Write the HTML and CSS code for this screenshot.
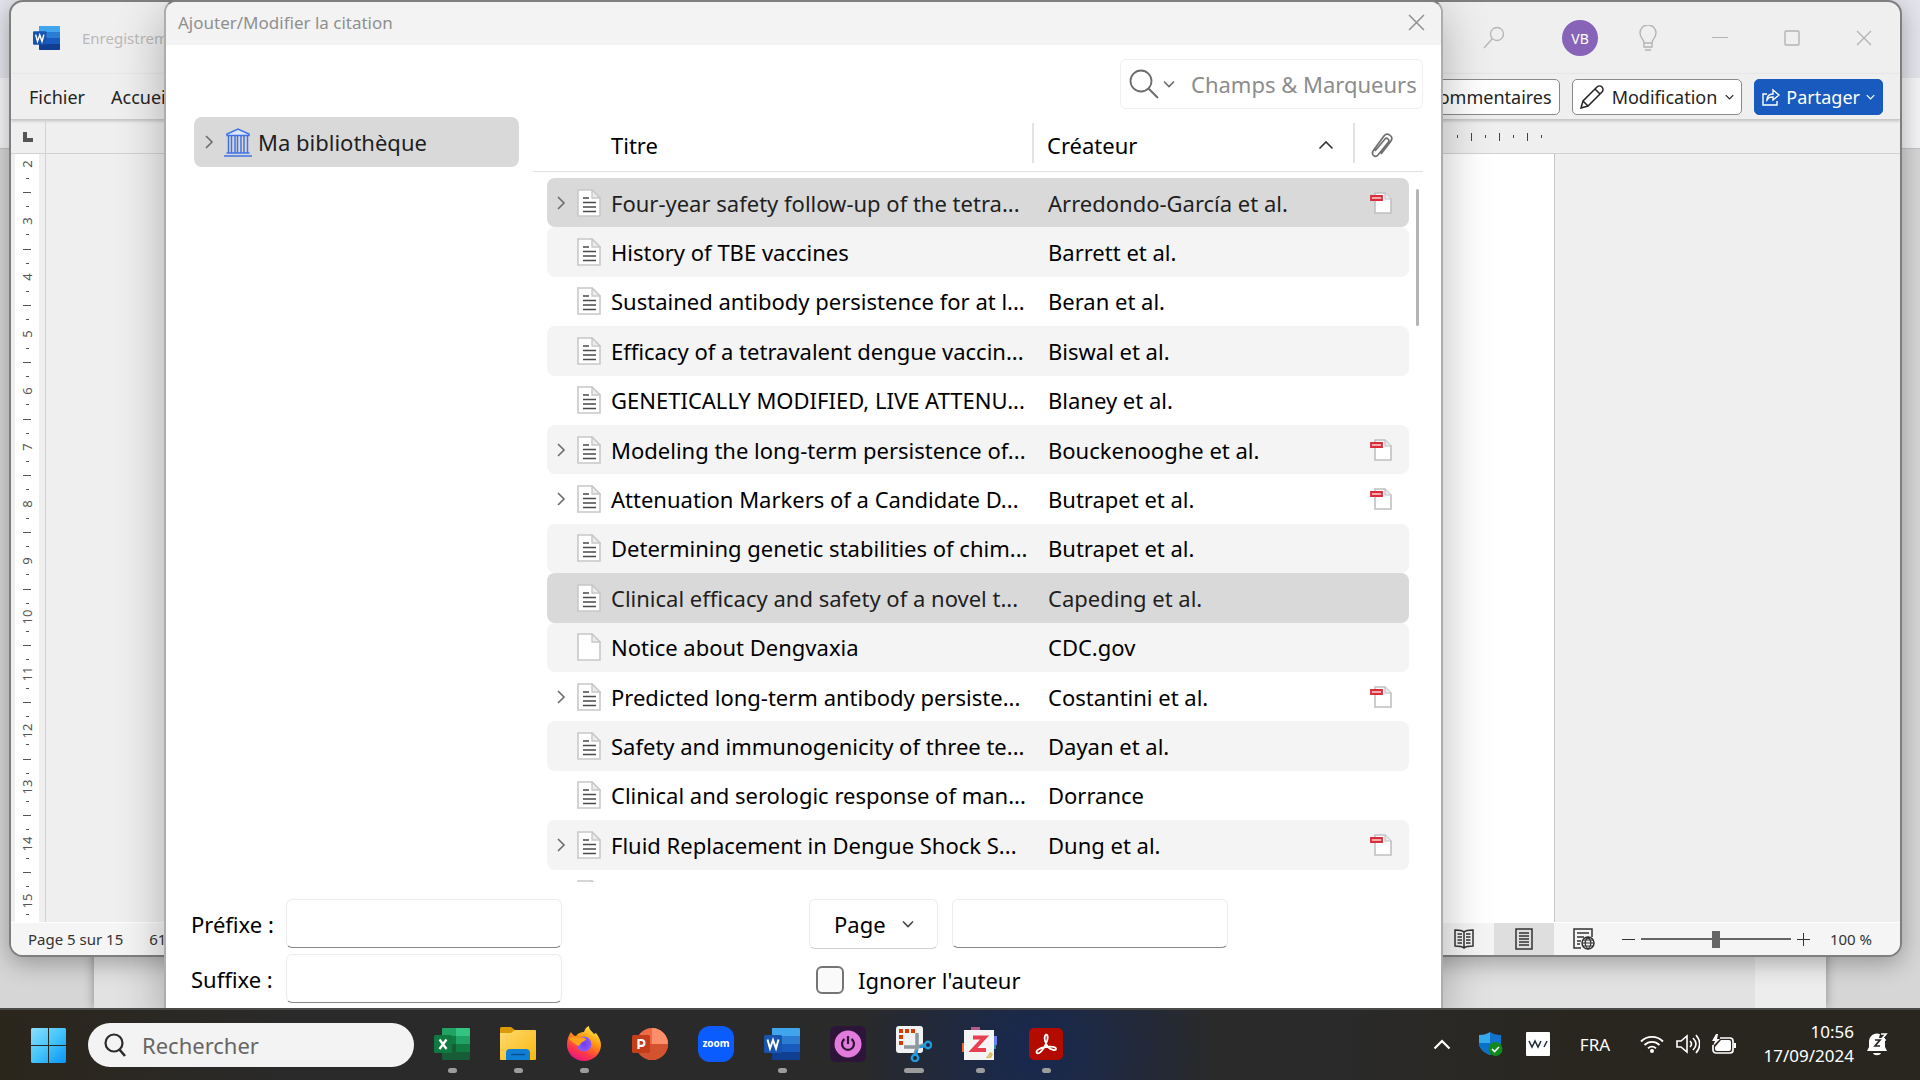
FILE: index.html
```html
<!DOCTYPE html>
<html lang="fr">
<head>
    <meta charset="UTF-8">
    <meta name="viewport" content="width=device-width, initial-scale=1.0">
    <title>Ajouter/Modifier la citation</title>
    <link rel="stylesheet" href="styles.css">
</head>
<body>
    <!-- shared icons -->
    <svg class="sprite" aria-hidden="true">
        <symbol id="chevron-right" viewBox="0 0 10 16"><path d="M2 2l6 6-6 6" fill="none" stroke="currentColor" stroke-width="1.6"/></symbol>
        <symbol id="chevron-down" viewBox="0 0 12 8"><path d="M1 1.5l5 5 5-5" fill="none" stroke="currentColor" stroke-width="1.6"/></symbol>
        <symbol id="close" viewBox="0 0 16 16"><path d="M1 1l14 14M15 1L1 15" fill="none" stroke="currentColor" stroke-width="1.4"/></symbol>
        <symbol id="article" viewBox="0 0 24 28">
            <path d="M1 1h14l8 8v18H1z" fill="#fff" stroke="#c8c8c8" stroke-width="1.6"/>
            <path d="M15 1v8h8z" fill="#ececec" stroke="#c8c8c8" stroke-width="1.4"/>
            <path d="M6 9h6M6 13.500h13M6 18h13M6 22.500h13" stroke="#4a4a4a" stroke-width="1.7"/>
        </symbol>
        <symbol id="page" viewBox="0 0 24 28">
            <path d="M1 1h14l8 8v18H1z" fill="#fff" stroke="#c8c8c8" stroke-width="1.6"/>
            <path d="M15 1v8h8z" fill="#ececec" stroke="#c8c8c8" stroke-width="1.4"/>
        </symbol>
        <symbol id="pdf" viewBox="0 0 22 22">
            <path d="M5 1h10l6 6v14H5z" fill="#fff" stroke="#c0c0c0" stroke-width="1.6"/>
            <path d="M15 1v6h6" fill="#ececec" stroke="#c0c0c0" stroke-width="1.2"/>
            <path d="M1 4h11v4H1z" fill="#f3a9b0" stroke="#db2c3a" stroke-width="1.8"/>
        </symbol>
        <symbol id="word" viewBox="0 0 36 32">
            <path d="M8 0h27a1 1 0 0 1 1 1v7H8z" fill="#41a5ee"/>
            <path d="M8 8h28v8H8z" fill="#2b7cd3"/>
            <path d="M8 16h28v8H8z" fill="#185abd"/>
            <path d="M8 24h28v7a1 1 0 0 1-1 1H9a1 1 0 0 1-1-1z" fill="#103f91"/>
            <rect y="7" width="18" height="18" rx="1.500" fill="#1853ae"/>
            <path d="M3.500 11.500l2.500 9 3-8.500 3 8.500 2.500-9" fill="none" stroke="#fff" stroke-width="2"/>
        </symbol>
    </svg>

    <main class="desktop">
        <div class="back-window">
            <div class="back-title"></div>
            <div class="back-ribbon"></div>
            <div class="back-canvas"><div class="back-page"></div></div>
        </div>

        <section class="word-window">
            <header class="word-title">
                <svg class="word-logo" viewBox="0 0 36 32"><use href="#word"/></svg>
                <span class="autosave">Enregistrem</span>
                <div class="word-tools">
                    <button aria-label="Rechercher"><svg width="22" height="24" viewBox="0 0 22 24"><circle cx="14" cy="8" r="6.500" fill="none" stroke="currentColor" stroke-width="1.300"/><path d="M9 13L1 22" stroke="currentColor" stroke-width="1.300"/></svg></button>
                    <button class="avatar">VB</button>
                    <button aria-label="Conseils"><svg width="18" height="26" viewBox="0 0 18 26"><path d="M5 18c0-4-4-5-4-10a8 8 0 0 1 16 0c0 5-4 6-4 10zM5 18v4h8v-4M6 25h6" fill="none" stroke="currentColor" stroke-width="1.400"/></svg></button>
                    <button aria-label="Réduire"><svg width="16" height="16"><path d="M0 7.500h16" stroke="currentColor"/></svg></button>
                    <button aria-label="Agrandir"><svg width="16" height="16"><rect x="1" y="1" width="14" height="14" rx="1" fill="none" stroke="currentColor" stroke-width="1.400"/></svg></button>
                    <button aria-label="Fermer"><svg width="16" height="16"><use href="#close"/></svg></button>
                </div>
            </header>

            <nav class="word-tabs">
                <button class="tab">Fichier</button>
                <button class="tab">Accueil</button>
                <div class="word-actions">
                    <button class="action">Commentaires</button>
                    <button class="action">
                        <svg width="24" height="24" viewBox="0 0 24 24"><path d="M1 23l2-7L17 2a3 3 0 0 1 5 5L8 21zM15 4l5 5M3 16l5 5" fill="none" stroke="currentColor" stroke-width="1.500"/></svg>
                        Modification
                        <svg width="9" height="6"><use href="#chevron-down"/></svg>
                    </button>
                    <button class="action share">
                        <svg width="18" height="18" viewBox="0 0 18 18"><path d="M5 6H1v11h14v-4M5 12c0-5 3-6 6-6V2l6 5-6 5V9c-3 0-4 0-6 3z" fill="none" stroke="currentColor" stroke-width="1.400"/></svg>
                        Partager
                        <svg width="9" height="6"><use href="#chevron-down"/></svg>
                    </button>
                </div>
            </nav>

            <div class="ruler-top">
                <div class="ruler-corner"><svg width="10" height="10"><path d="M2 0v8h8" fill="none" stroke="#555" stroke-width="4"/></svg></div>
                <div class="ticks"><i></i><b></b><i></i><b></b><i></i><b></b><i></i></div>
            </div>

            <div class="word-body">
                <ol class="ruler-left">
                    <li><span>2</span><i></i><b></b><i></i></li>
                    <li><span>3</span><i></i><b></b><i></i></li>
                    <li><span>4</span><i></i><b></b><i></i></li>
                    <li><span>5</span><i></i><b></b><i></i></li>
                    <li><span>6</span><i></i><b></b><i></i></li>
                    <li><span>7</span><i></i><b></b><i></i></li>
                    <li><span>8</span><i></i><b></b><i></i></li>
                    <li><span>9</span><i></i><b></b><i></i></li>
                    <li><span>10</span><i></i><b></b><i></i></li>
                    <li><span>11</span><i></i><b></b><i></i></li>
                    <li><span>12</span><i></i><b></b><i></i></li>
                    <li><span>13</span><i></i><b></b><i></i></li>
                    <li><span>14</span><i></i><b></b><i></i></li>
                    <li class="half"><span>15</span><i></i></li>
                </ol>
                <div class="word-canvas"><div class="word-page"></div></div>
            </div>

            <footer class="word-status">
                <span>Page 5 sur 15</span>
                <span class="words">6119 mots</span>
                <div class="views">
                    <button aria-label="Mode Lecture"><svg width="20" height="20" viewBox="0 0 20 20"><path d="M10 3C8 1 4 1 1 1v16c3 0 7 0 9 2 2-2 6-2 9-2V1c-3 0-7 0-9 2zv16M3.500 5H8M3.500 8H8M3.500 11H8M3.500 14H8M12 5h4.500M12 8h4.500M12 11h4.500M12 14h4.500" fill="none" stroke="currentColor" stroke-width="1.500"/></svg></button>
                    <button class="active" aria-label="Page"><svg width="18" height="22" viewBox="0 0 18 22"><path d="M1 1h16v20H1zM4 5h10M4 8h10M4 11h10M4 14h10M4 17h10" fill="none" stroke="currentColor" stroke-width="1.500"/></svg></button>
                    <button aria-label="Web"><svg width="22" height="22" viewBox="0 0 22 22"><path d="M8 20H1V1h18v8M4 5h12M4 9h7M4 13h4M4 16h3" fill="none" stroke="currentColor" stroke-width="1.500"/><circle cx="15" cy="15" r="6" fill="#f5f5f5" stroke="currentColor" stroke-width="1.500"/><path d="M9 15h12M10 12h10M10 18h10M15 9c-4 4-4 8 0 12M15 9c4 4 4 8 0 12" fill="none" stroke="currentColor" stroke-width="1.100"/></svg></button>
                </div>
                <div class="zoom">
                    <button aria-label="Zoom arrière"><svg width="13" height="13"><path d="M0 6.500h13" stroke="currentColor"/></svg></button>
                    <input type="range" min="0" max="100" value="50" aria-label="Zoom">
                    <button aria-label="Zoom avant"><svg width="13" height="13"><path d="M0 6.500h13M6.500 0v13" stroke="currentColor"/></svg></button>
                    <span>100 %</span>
                </div>
            </footer>
        </section>

        <section class="dialog">
            <header class="dialog-title">
                <span>Ajouter/Modifier la citation</span>
                <button aria-label="Fermer"><svg width="17" height="17"><use href="#close"/></svg></button>
            </header>

            <div class="search-row">
                <div class="search">
                    <svg width="30" height="30" viewBox="0 0 30 30"><circle cx="12" cy="12" r="10.500" fill="none" stroke="#6c6c6c" stroke-width="1.800"/><path d="M19.500 19.500L29 29" stroke="#6c6c6c" stroke-width="2"/></svg>
                    <svg width="12" height="8"><use href="#chevron-down"/></svg>
                    <input type="text" placeholder="Champs &amp; Marqueurs" aria-label="Champs &amp; Marqueurs">
                </div>
            </div>

            <div class="panes">
                <div class="collections">
                    <button class="collection">
                        <svg class="twisty" viewBox="0 0 10 16"><use href="#chevron-right"/></svg>
                        <svg width="28" height="29" viewBox="0 0 28 29"><path d="M3 7.500V6l11-5 11 5v1.500z" fill="#dbe5fb" stroke="#4072e5" stroke-width="1.500"/><path d="M2.500 25h23M0 28h28" stroke="#4072e5" stroke-width="1.600"/><path d="M4.500 8v17M7.500 8v17M11 8v17M13.500 8v17M17 8v17M20 8v17M23.500 8v17" stroke="#4072e5" stroke-width="1.500"/></svg>
                        Ma bibliothèque
                    </button>
                </div>

                <div class="items">
                    <table class="tree">
                        <thead>
                            <tr>
                                <th class="title">Titre</th>
                                <th class="creator">Créateur <svg width="16" height="10" viewBox="0 0 16 10"><path d="M1.500 8.500L8 2l6.500 6.500" fill="none" stroke="#333" stroke-width="1.600"/></svg></th>
                                <th class="attach"><svg width="28" height="28" viewBox="0 0 28 28"><path d="M8 19L18 7c2-2 5 1 3.500 3L11 23c-3 3-7 0-5-4L17 4c3-4 10 0 7 5L14 22" transform="translate(0 1)" fill="none" stroke="#707070" stroke-width="1.700"/></svg></th>
                            </tr>
                        </thead>
                        <tbody>
                            <tr class="selected"><td class="title"><svg class="twisty"><use href="#chevron-right"/></svg><svg class="kind"><use href="#article"/></svg>Four-year safety follow-up of the tetra...</td><td class="creator">Arredondo-García et al.</td><td class="attach"><svg><use href="#pdf"/></svg></td></tr>
                            <tr><td class="title"><svg class="kind"><use href="#article"/></svg>History of TBE vaccines</td><td class="creator">Barrett et al.</td><td class="attach"></td></tr>
                            <tr><td class="title"><svg class="kind"><use href="#article"/></svg>Sustained antibody persistence for at l...</td><td class="creator">Beran et al.</td><td class="attach"></td></tr>
                            <tr><td class="title"><svg class="kind"><use href="#article"/></svg>Efficacy of a tetravalent dengue vaccin...</td><td class="creator">Biswal et al.</td><td class="attach"></td></tr>
                            <tr><td class="title"><svg class="kind"><use href="#article"/></svg>GENETICALLY MODIFIED, LIVE ATTENU...</td><td class="creator">Blaney et al.</td><td class="attach"></td></tr>
                            <tr><td class="title"><svg class="twisty"><use href="#chevron-right"/></svg><svg class="kind"><use href="#article"/></svg>Modeling the long-term persistence of...</td><td class="creator">Bouckenooghe et al.</td><td class="attach"><svg><use href="#pdf"/></svg></td></tr>
                            <tr><td class="title"><svg class="twisty"><use href="#chevron-right"/></svg><svg class="kind"><use href="#article"/></svg>Attenuation Markers of a Candidate D...</td><td class="creator">Butrapet et al.</td><td class="attach"><svg><use href="#pdf"/></svg></td></tr>
                            <tr><td class="title"><svg class="kind"><use href="#article"/></svg>Determining genetic stabilities of chim...</td><td class="creator">Butrapet et al.</td><td class="attach"></td></tr>
                            <tr class="selected"><td class="title"><svg class="kind"><use href="#article"/></svg>Clinical efficacy and safety of a novel t...</td><td class="creator">Capeding et al.</td><td class="attach"></td></tr>
                            <tr><td class="title"><svg class="kind"><use href="#page"/></svg>Notice about Dengvaxia</td><td class="creator">CDC.gov</td><td class="attach"></td></tr>
                            <tr><td class="title"><svg class="twisty"><use href="#chevron-right"/></svg><svg class="kind"><use href="#article"/></svg>Predicted long-term antibody persiste...</td><td class="creator">Costantini et al.</td><td class="attach"><svg><use href="#pdf"/></svg></td></tr>
                            <tr><td class="title"><svg class="kind"><use href="#article"/></svg>Safety and immunogenicity of three te...</td><td class="creator">Dayan et al.</td><td class="attach"></td></tr>
                            <tr><td class="title"><svg class="kind"><use href="#article"/></svg>Clinical and serologic response of man...</td><td class="creator">Dorrance</td><td class="attach"></td></tr>
                            <tr><td class="title"><svg class="twisty"><use href="#chevron-right"/></svg><svg class="kind"><use href="#article"/></svg>Fluid Replacement in Dengue Shock S...</td><td class="creator">Dung et al.</td><td class="attach"><svg><use href="#pdf"/></svg></td></tr>
                            <tr><td class="title"><svg class="kind"><use href="#article"/></svg></td><td class="creator"></td><td class="attach"></td></tr>
                        </tbody>
                    </table>
                    <div class="scroll-thumb"></div>
                </div>
            </div>

            <form class="options">
                <div class="affixes">
                    <label for="prefix">Préfixe :</label>
                    <input type="text" id="prefix">
                    <label for="suffix">Suffixe :</label>
                    <input type="text" id="suffix">
                </div>
                <div class="locator">
                    <div class="locator-row">
                        <div class="select">
                            <select aria-label="Localisateur"><option>Page</option></select>
                            <svg width="12" height="8"><use href="#chevron-down"/></svg>
                        </div>
                        <input type="text" aria-label="Numéro">
                    </div>
                    <div class="check-row">
                        <input type="checkbox" id="omit">
                        <label for="omit">Ignorer l'auteur</label>
                    </div>
                </div>
            </form>
        </section>
    </main>

    <footer class="taskbar">
        <button class="start" aria-label="Démarrer">
            <svg width="35" height="35" viewBox="0 0 35 35"><defs><linearGradient id="win" x1="0" y1="0" x2="35" y2="35" gradientUnits="userSpaceOnUse"><stop offset="0" stop-color="#8ce0fd"/><stop offset=".5" stop-color="#43c4fa"/><stop offset="1" stop-color="#0a93f5"/></linearGradient></defs><path d="M1 0h16v17H0V1zM18 0h16l1 1v16H18zM0 18h17v17H1l-1-1zM18 18h17v16l-1 1H18z" fill="url(#win)"/></svg>
        </button>
        <label class="task-search">
            <svg width="22" height="24" viewBox="0 0 22 24"><circle cx="10" cy="10" r="8.500" fill="none" stroke="#2b2b2b" stroke-width="2.200"/><path d="M15 16l6 7" stroke="#2b2b2b" stroke-width="2.600"/></svg>
            <input type="text" placeholder="Rechercher" aria-label="Rechercher">
        </label>

        <div class="apps">
            <button class="app open" aria-label="Excel">
                <svg width="36" height="32" viewBox="0 0 36 32"><path d="M8 1a1 1 0 0 1 1-1h13v8H8z" fill="#21a366"/><path d="M22 0h13a1 1 0 0 1 1 1v7H22z" fill="#33c481"/><path d="M8 8h14v8H8z" fill="#107c41"/><path d="M22 8h14v8H22z" fill="#21a366"/><path d="M8 16h14v8H8z" fill="#185c37"/><path d="M22 16h14v8H22z" fill="#107c41"/><path d="M8 24h28v7a1 1 0 0 1-1 1H9a1 1 0 0 1-1-1z" fill="#185c37"/><rect y="7" width="18" height="18" rx="1.500" fill="#10793f"/><path d="M5.500 11.500l7 9.500M12.500 11.500l-7 9.500" stroke="#fff" stroke-width="2.300"/></svg>
            </button>
            <button class="app open" aria-label="Explorateur">
                <svg width="36" height="34" viewBox="0 0 36 34"><defs><linearGradient id="fold" x1="0" y1="0" x2="1" y2="1"><stop offset="0" stop-color="#ffdb72"/><stop offset="1" stop-color="#f9b60a"/></linearGradient></defs><path d="M0 1.500A1.500 1.500 0 0 1 1.500 0H11l4 3h20l1 2v7H0z" fill="#dc9b06"/><path d="M0 6h11l4-3h20a1 1 0 0 1 1 1v28a1 1 0 0 1-1 1H1a1 1 0 0 1-1-1z" fill="url(#fold)"/><path d="M6 33v-7a4 4 0 0 1 4-4h16a4 4 0 0 1 4 4v7z" fill="#0f7fd4"/><path d="M11 27.500h14" stroke="#0a4f96" stroke-width="1.500"/></svg>
            </button>
            <button class="app open" aria-label="Firefox">
                <svg width="34" height="36" viewBox="0 0 34 36"><defs><linearGradient id="fox" x1=".8" y1="0" x2=".3" y2="1"><stop offset="0" stop-color="#fff44f"/><stop offset=".4" stop-color="#ff980e"/><stop offset=".75" stop-color="#ff3647"/><stop offset="1" stop-color="#e31587"/></linearGradient><radialGradient id="globe"><stop offset="0" stop-color="#6a3de8"/><stop offset="1" stop-color="#9059ff"/></radialGradient></defs><path d="M4 6c1 2 3 4 5 4 2-3 5-4 8-4 1-3 2-5 5-6 0 4 3 5 5 8l2-1c3 4 5 8 5 12 0 9-8 16-17 16S0 28 0 19c0-5 1-9 4-13z" fill="url(#fox)"/><circle cx="17" cy="18" r="7.500" fill="url(#globe)"/><path d="M2 13c4-3 8-2 10-1 3-1 6 0 7 1-1 3-4 2-5 4-1 1-1 2-2 3-4-1-6-4-10-7z" fill="#ffa21a"/></svg>
            </button>
            <button class="app" aria-label="PowerPoint">
                <svg width="36" height="32" viewBox="0 0 36 32"><circle cx="20" cy="16" r="16" fill="#ed6c47"/><path d="M20 0a16 16 0 0 1 16 16H20z" fill="#ff8f6b"/><path d="M4 16h32a16 16 0 0 1-32 0z" fill="#d35230"/><rect y="7" width="18" height="18" rx="1.500" fill="#c43e1c"/><path d="M6.500 21v-9h3a2.700 2.700 0 0 1 0 5.800h-3" fill="none" stroke="#fff" stroke-width="2.200"/></svg>
            </button>
            <button class="app" aria-label="Zoom"><span class="zoom-logo">zoom</span></button>
            <button class="app open" aria-label="Word"><svg width="36" height="32"><use href="#word"/></svg></button>
            <button class="app" aria-label="Alimentation">
                <svg width="36" height="36" viewBox="0 0 36 36"><rect width="36" height="36" rx="6" fill="#2d1539"/><circle cx="18" cy="18" r="13.500" fill="#e37bdc"/><path d="M14.500 13a6 6 0 1 0 7 0M18 10v8" fill="none" stroke="#2d1539" stroke-width="2.200"/></svg>
            </button>
            <button class="app open current" aria-label="Capture">
                <svg width="36" height="36" viewBox="0 0 36 36"><rect width="27" height="27" rx="3" fill="#f0f2f3"/><path d="M5 3v17" fill="none" stroke="#d83b01" stroke-width="4" stroke-dasharray="4 2"/><path d="M9 5h10" stroke="#d83b01" stroke-width="4" stroke-dasharray="4 2"/><path d="M21 7v15l-2 6M8 21h14l6-2" fill="none" stroke="#8e979d" stroke-width="3.500"/><circle cx="32" cy="19" r="3.200" fill="none" stroke="#1e9be0" stroke-width="2.400"/><circle cx="19" cy="32" r="3.200" fill="none" stroke="#1e9be0" stroke-width="2.400"/><path d="M21 24l-1 5M24 21l5-1" stroke="#1e9be0" stroke-width="2.600"/></svg>
            </button>
            <button class="app open" aria-label="Zotero">
                <svg width="36" height="34" viewBox="0 0 36 34"><path d="M9 0h9v5H9z" fill="#b5588a"/><path d="M28 9h7v9h-7z" fill="#6d7fe8"/><path d="M0 16h5v9H0z" fill="#ee6a3a"/><path d="M28 18h6v4h-6z" fill="#2e8fa0"/><path d="M2 3h30v30H2z" fill="#f4f4f4"/><path d="M24 31l4-6 3 2-2 4z" fill="#dcb93d"/><path d="M32 22c-2 6-5 9-9 11 3-2 4-4 3-5 3 0 5-2 6-6z" fill="#cfcfcf"/><path d="M11 10.500h11.500L11 23h13" fill="none" stroke="#e83f50" stroke-width="4"/></svg>
            </button>
            <button class="app open" aria-label="Acrobat">
                <svg width="34" height="32" viewBox="0 0 34 32"><rect width="34" height="32" rx="5" fill="#b30b00"/><path d="M8 25c-2-2 2-5 9-6 6-1 10 0 10 2s-5 1-8-2c-3-4-4-9-3-11 1-3 4-1 2 5-2 6-7 14-10 12z" fill="none" stroke="#fff" stroke-width="1.800"/></svg>
            </button>
        </div>

        <div class="tray">
            <button aria-label="Icônes masquées"><svg width="18" height="11" viewBox="0 0 18 11"><path d="M1.500 9.500L9 2l7.500 7.500" fill="none" stroke="#fff" stroke-width="2.200"/></svg></button>
            <button class="shield" aria-label="Sécurité"><svg width="24" height="24" viewBox="0 0 24 24"><path d="M0 3c5 0 8-1 11-3v23C4 20 0 16 0 10z" fill="#35a9ea"/><path d="M11 0c3 2 6 3 11 3v7c0 6-4 10-11 13z" fill="#1173cc"/><path d="M0 11h11v12C4 20 0 16 0 11z" fill="#0b70c8"/><circle cx="16.500" cy="17" r="7" fill="#118a1d"/><path d="M13 17l2.500 2.500 4.500-4.500" fill="none" stroke="#fff" stroke-width="1.600"/></svg></button>
            <button class="wbox" aria-label="W"><svg width="24" height="24" viewBox="0 0 24 24"><rect width="24" height="24" rx="1" fill="#fff"/><path d="M3 9l3 6 3-6 3 6 3-6M18 15l3-6" fill="none" stroke="#1c2b36" stroke-width="1.500"/></svg></button>
            <button class="lang">FRA</button>
            <button class="system" aria-label="Réseau, son, batterie">
                <svg width="24" height="18" viewBox="0 0 24 18"><path d="M1 6.500a15.500 15.500 0 0 1 22 0M4.500 10a10.600 10.600 0 0 1 15 0M8 13.300a5.700 5.700 0 0 1 8 0" fill="none" stroke="#fff" stroke-width="1.800"/><circle cx="12" cy="16" r="2" fill="#fff"/></svg>
                <svg width="24" height="20" viewBox="0 0 24 20"><path d="M1 7h4l6-5v16l-6-5H1zM14 7c2 2 2 4 0 6M17 4c4 4 4 8 0 12M20 1c5 6 5 12 0 18" fill="none" stroke="#fff" stroke-width="1.600"/></svg>
                <svg width="24" height="20" viewBox="0 0 24 20"><path d="M8 4h10a3 3 0 0 1 3 3v9a3 3 0 0 1-3 3H4a3 3 0 0 1-3-3v-5" fill="none" stroke="#fff" stroke-width="1.700"/><path d="M9 6h8a2 2 0 0 1 2 2v7a2 2 0 0 1-2 2H5a2 2 0 0 1-2-2v-2zM22 9h2v5h-2zM4 0L0 7h3l-2 5 7-7H5l1-5z" fill="#fff"/></svg>
            </button>
            <button class="clock"><span>10:56</span><span>17/09/2024</span></button>
            <button class="bell" aria-label="Notifications"><svg width="22" height="24" viewBox="0 0 22 24"><path d="M0 19l2-4V9a8 8 0 0 1 11-7l-1 4h6v9l2 4zM6 21h8c-1 3-7 3-8 0z" fill="#fff"/><path d="M14 2h5l-5 6h5" fill="none" stroke="#fff" stroke-width="1.700"/><path d="M8 8h5l-5 6h5" fill="none" stroke="#29261f" stroke-width="1.700"/></svg></button>
        </div>
    </footer>
</body>
</html>
```
FILE: styles.css
```css
* {
    margin: 0;
    padding: 0;
    box-sizing: border-box;
}

body {
    height: 100vh;
    display: flex;
    flex-direction: column;
    overflow: hidden;
    font-family: "Noto Sans", "Open Sans", sans-serif;
    color: #000;
}

button {
    font: inherit;
    color: inherit;
    background: none;
    border: none;
    display: flex;
    align-items: center;
    justify-content: center;
}

input,
select {
    font: inherit;
    color: inherit;
    outline: none;
}

svg {
    flex: none;
}

.sprite {
    position: absolute;
    width: 0;
    height: 0;
}

.desktop {
    flex: 1;
    position: relative;
    overflow: hidden;
}

/* window at the very back */
.back-window {
    height: 100%;
    display: flex;
    flex-direction: column;
}

.back-title {
    height: 78px;
    background: #e4e4ec;
}

.back-ribbon {
    height: 71px;
    background: #f5f5f8;
    border-bottom: 1px solid #c2c2c2;
}

.back-canvas {
    flex: 1;
    display: flex;
    padding: 0 94px;
    background: #d6d6d6;
}

.back-page {
    flex: 1;
    background: #e2e2e2;
    border-right: 71px solid #ededed;
    box-shadow: 0 0 10px rgba(0, 0, 0, 0.35);
}

/* Word */
.word-window {
    position: absolute;
    inset: 0 18px 51px 9px;
    display: flex;
    flex-direction: column;
    overflow: hidden;
    background: #efefef;
    border: 2px solid #7f7f7f;
    border-radius: 14px;
    box-shadow: 0 6px 24px rgba(0, 0, 0, 0.3);
}

.word-title {
    height: 72px;
    display: flex;
    align-items: center;
    padding: 0 24px 0 22px;
    gap: 22px;
}

.word-logo {
    width: 27px;
    height: 24px;
}

.autosave {
    color: #b9b9b9;
    font-size: 15px;
}

.word-tools {
    margin-left: auto;
    display: flex;
    align-items: center;
    color: #b4b4b4;
}

.word-tools button {
    width: 72px;
    height: 36px;
}

.word-tools button:last-child {
    width: 24px;
    margin-left: 24px;
}

.word-tools .avatar {
    width: 36px;
    margin: 0 14px 0 32px;
    border-radius: 50%;
    background: #8764b8;
    color: #fff;
    font-size: 14px;
}

.word-tabs {
    height: 46px;
    display: flex;
    align-items: center;
    gap: 26px;
    padding: 0 17px 0 18px;
    border-bottom: 1px solid #c9c9c9;
    box-shadow: 0 1px 3px rgba(0, 0, 0, 0.2);
    font-size: 18px;
    color: #242424;
}

.word-actions {
    margin-left: auto;
    display: flex;
    gap: 12px;
}

.action {
    height: 36px;
    gap: 8px;
    padding: 0 7px;
    background: #fff;
    border: 1px solid #8a8a8a;
    border-radius: 5px;
}

.action.share {
    gap: 6px;
    background: #185abd;
    border-color: #185abd;
    color: #fff;
}

.ruler-top {
    height: 34px;
    display: flex;
    border-bottom: 1px solid #d2d2d2;
}

.ruler-corner {
    width: 35px;
    display: flex;
    align-items: center;
    justify-content: center;
    border-right: 1px solid #d2d2d2;
}

.ticks {
    margin-left: auto;
    margin-right: 358px;
    display: flex;
    align-items: center;
    gap: 13px;
}

.ticks i,
.ticks b {
    width: 1px;
    height: 3px;
    background: #444;
}

.ticks b {
    height: 8px;
}

.word-body {
    flex: 1;
    min-height: 0;
    display: flex;
}

.ruler-left {
    width: 24px;
    margin-left: 4px;
    padding-top: 3px;
    display: flex;
    flex-direction: column;
    background: #fff;
    list-style: none;
    color: #555;
    font-size: 13px;
}

.ruler-left li {
    flex: 4 0 0;
    min-height: 0;
    display: flex;
    flex-direction: column;
}

.ruler-left .half {
    flex-grow: 2;
}

.ruler-left li > * {
    flex: 1 0 0;
    min-height: 0;
    display: flex;
    align-items: center;
    justify-content: center;
}

.ruler-left span {
    transform: rotate(-90deg);
}

.ruler-left i::before,
.ruler-left b::before {
    content: "";
    width: 3px;
    height: 1px;
    background: #555;
}

.ruler-left b::before {
    width: 8px;
}

.word-canvas {
    flex: 1;
    display: flex;
    margin-left: 6px;
    padding: 0 345px;
    border-left: 1px solid #d2d2d2;
}

.word-page {
    flex: 1;
    background: #fff;
    border-right: 1px solid #c6c6c6;
}

.word-status {
    height: 33px;
    display: flex;
    align-items: center;
    padding: 0 28px 0 17px;
    background: #f5f5f5;
    border-top: 1px solid #fff;
    font-size: 15px;
    color: #333;
}

.words {
    margin-left: 26px;
}

.views {
    margin-left: auto;
    margin-right: 8px;
    align-self: stretch;
    display: flex;
}

.views button {
    width: 60px;
}

.views .active {
    background: #dedede;
}

.zoom {
    display: flex;
    align-items: center;
    gap: 6px;
}

.zoom > span {
    margin-left: 14px;
}

.zoom input {
    width: 150px;
    height: 18px;
    appearance: none;
    background: linear-gradient(#666, #666) center / 100% 2px no-repeat;
}

.zoom input::-webkit-slider-thumb {
    appearance: none;
    width: 8px;
    height: 17px;
    background: #666;
}

/* citation dialog */
.dialog {
    position: absolute;
    inset: 0 477px -12px 164px;
    display: flex;
    flex-direction: column;
    overflow: hidden;
    background: #fff;
    border: 2px solid #adadad;
    border-top-color: #7f7f7f;
    border-radius: 12px;
    box-shadow: 0 12px 48px rgba(0, 0, 0, 0.28);
    font-size: 22px;
}

.dialog-title {
    height: 43px;
    display: flex;
    align-items: center;
    justify-content: space-between;
    padding: 0 16px 2px 12px;
    background: #f3f3f3;
    color: #8f8f8f;
    font-size: 17px;
}

.search-row {
    display: flex;
    justify-content: flex-end;
    padding: 14px 18px 8px;
}

.search {
    width: 303px;
    height: 50px;
    display: flex;
    align-items: center;
    gap: 4px;
    padding: 0 2px 0 8px;
    border: 1px solid #efefef;
    border-radius: 6px;
    color: #6c6c6c;
}

.search input {
    flex: 1;
    min-width: 0;
    margin-left: 12px;
    border: none;
    background: none;
}

.search input::placeholder {
    color: #8c8c8c;
}

.panes {
    flex: 1;
    min-height: 0;
    display: flex;
    gap: 14px;
    padding: 0 18px 0 28px;
}

.collections {
    width: 325px;
}

.collection {
    width: 100%;
    height: 50px;
    justify-content: flex-start;
    padding: 0 10px;
    gap: 6px;
    background: #d9d9d9;
    border-radius: 8px;
    color: #1f1f1f;
}

.twisty {
    width: 10px;
    height: 16px;
    margin-right: 4px;
    color: #6c6c6c;
}

.items {
    flex: 1;
    min-width: 0;
    position: relative;
    overflow: hidden;
    padding-top: 6px;
}

.tree,
.tree thead {
    display: block;
}

.tree thead {
    border-bottom: 1px solid #e0e0e0;
}

.tree tr {
    display: flex;
}

.tree th {
    height: 40px;
    margin-bottom: 8px;
    padding-top: 4px;
    display: flex;
    align-items: center;
    font-weight: normal;
}

.tree th + th {
    border-left: 2px solid #e3e3e3;
}

.tree tbody {
    height: 741px;
    margin: 6px 14px 0;
    display: grid;
    grid-template-rows: repeat(15, 1fr);
}

.tree tbody tr {
    border-radius: 8px;
}

.tree tbody tr:nth-child(even) {
    background: #f4f4f4;
}

.tree tbody tr.selected {
    background: #d9d9d9;
    color: #1f1f1f;
}

.tree td {
    display: flex;
    align-items: center;
    white-space: nowrap;
}

.tree .title {
    flex: 1;
    min-width: 0;
}

.tree th.title {
    padding-left: 78px;
}

.tree td.title {
    justify-content: flex-start;
    padding-left: 30px;
}

.tree .title .twisty {
    margin: 0 11px 0 -21px;
}

.kind {
    width: 24px;
    height: 28px;
    margin-right: 10px;
}

.tree .creator {
    width: 321px;
    padding-left: 13px;
}

.tree td.creator {
    width: 320px;
    padding-left: 14px;
}

.creator svg {
    margin-left: auto;
    margin-right: 19px;
}

.tree .attach {
    width: 70px;
    padding-left: 12px;
}

.tree td.attach {
    width: 55px;
    padding-left: 16px;
}

td.attach svg {
    width: 22px;
    height: 22px;
}

.scroll-thumb {
    position: absolute;
    top: 72px;
    right: 4px;
    width: 3px;
    height: 137px;
    border-radius: 2px;
    background: #b5b5b5;
}

.options {
    display: flex;
    gap: 247px;
    padding: 17px 25px 15px;
}

.options label {
    white-space: nowrap;
}

.affixes {
    display: grid;
    grid-template-columns: 80px 276px;
    column-gap: 15px;
    row-gap: 6px;
    align-items: center;
}

.options input[type="text"] {
    width: 276px;
    height: 49px;
    padding: 0 12px;
    border: 1px solid #ececec;
    border-bottom: 1px solid #868686;
    border-radius: 6px;
    background: #fff;
}

.locator-row {
    display: flex;
    gap: 14px;
}

.select {
    display: flex;
    align-items: center;
    color: #444;
}

.select select {
    appearance: none;
    width: 129px;
    height: 50px;
    padding-left: 24px;
    border: 1px solid #ececec;
    border-bottom-color: #d0d0d0;
    border-radius: 6px;
    background: #fff;
    color: #000;
}

.select svg {
    margin-left: -36px;
    margin-right: 24px;
    pointer-events: none;
}

.check-row {
    display: flex;
    align-items: center;
    gap: 14px;
    padding: 16px 7px 0;
}

.check-row input {
    appearance: none;
    width: 28px;
    height: 28px;
    border: 2px solid #757575;
    border-radius: 6px;
    background: #fafafa;
}

/* taskbar */
.taskbar {
    position: relative;
    height: 72px;
    display: flex;
    align-items: center;
    padding: 0 31px;
    border-top: 2px solid #4a4a48;
    background: radial-gradient(circle at 1035px 40px, #172850 0, transparent 180px), linear-gradient(90deg, #2b261c 0, #2a2a2a 15%, #2a2a2a 70%, #29261f 82%, #29261f 100%);
    color: #fff;
}

.task-search {
    width: 326px;
    height: 44px;
    margin-left: 22px;
    padding: 0 16px;
    display: flex;
    align-items: center;
    gap: 16px;
    border-radius: 22px;
    background: #f3f3f3;
    color: #222;
    font-size: 22px;
}

.task-search input {
    flex: 1;
    min-width: 0;
    border: none;
    background: none;
}

.task-search input::placeholder {
    color: #666;
}

.apps {
    align-self: stretch;
    margin-left: 5px;
    display: flex;
}

.app {
    width: 66px;
    position: relative;
    padding-bottom: 2px;
}

.app.open::after {
    content: "";
    position: absolute;
    bottom: 7px;
    width: 9px;
    height: 5px;
    border-radius: 3px;
    background: #9c9c9c;
}

.app.current::after {
    width: 20px;
}

.zoom-logo {
    width: 36px;
    height: 36px;
    border-radius: 12px;
    background: #0b5cff;
    font-size: 10px;
    font-weight: bold;
    line-height: 34px;
}

.tray {
    margin-left: auto;
    padding-bottom: 2px;
    display: flex;
    align-items: center;
    font-size: 17px;
}

.tray .shield {
    margin-left: 28px;
}

.tray .wbox {
    margin-left: 23px;
}

.tray .lang {
    width: 90px;
}

.tray .system {
    gap: 12px;
}

.tray .clock {
    width: 118px;
    flex-direction: column;
    align-items: flex-end;
    line-height: 24px;
}

.tray .bell {
    margin-left: 13px;
}
```
